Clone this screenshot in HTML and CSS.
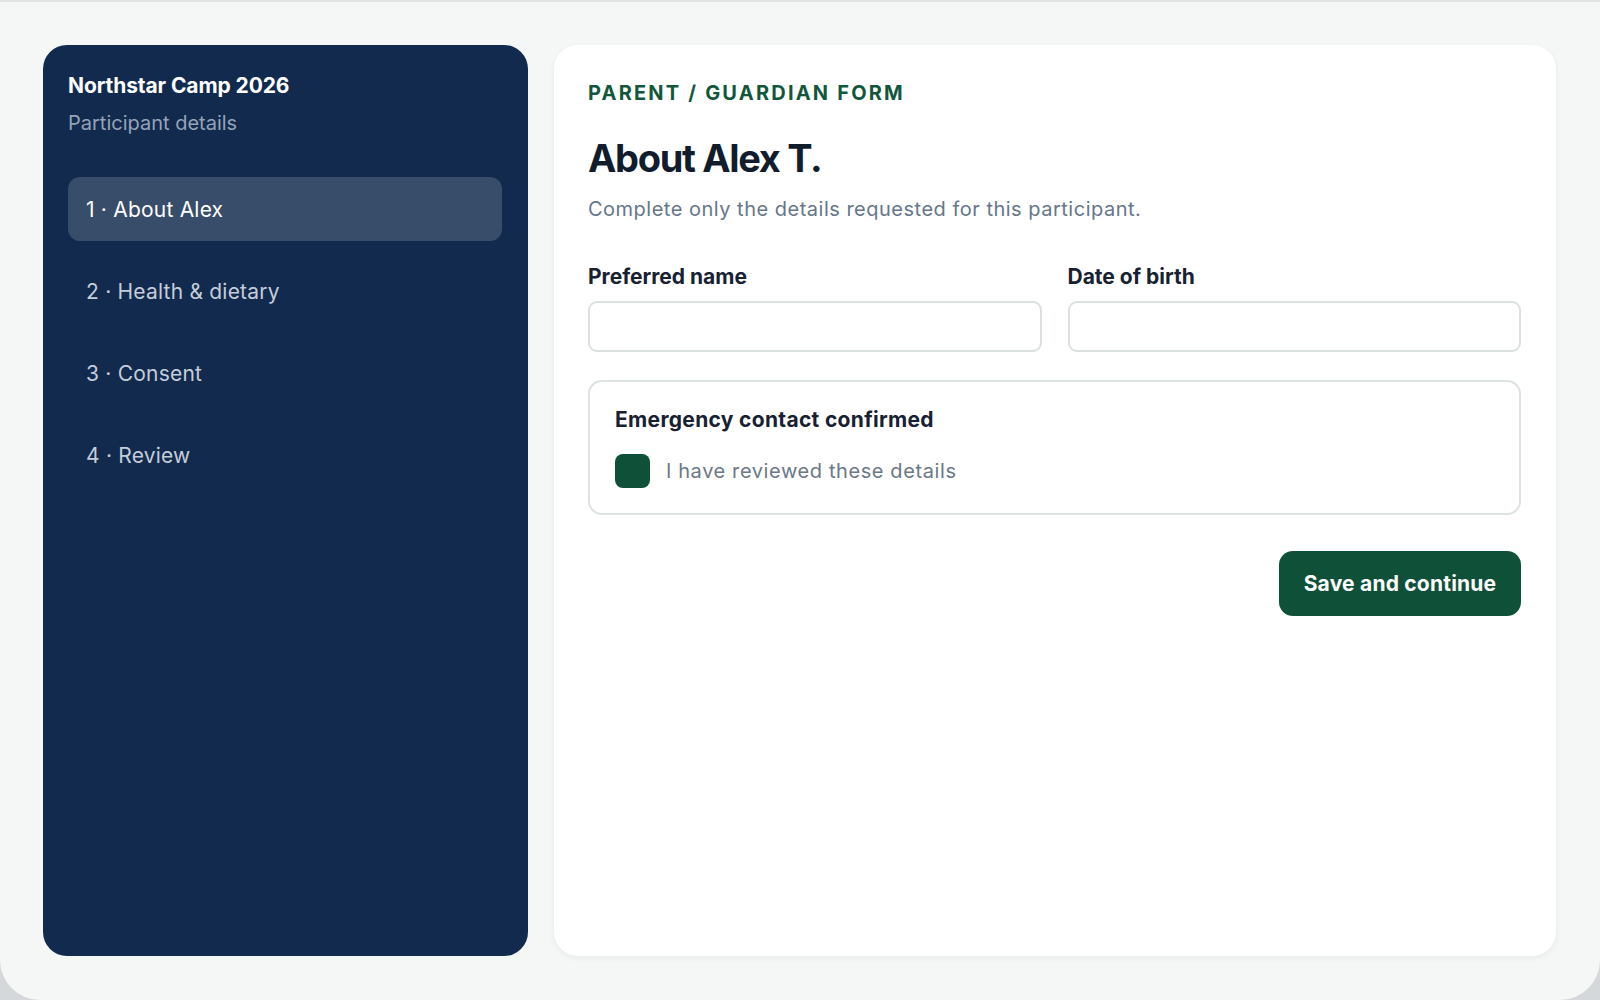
FILE: index.html
```html
<!DOCTYPE html>
<html lang="en">
<head>
<meta charset="utf-8">
<title>Northstar Camp 2026 – About Alex</title>
<link rel="stylesheet" href="styles.css">
</head>
<body>
<div class="page">
  <aside class="sidebar">
    <div class="brand">Northstar Camp 2026</div>
    <div class="brand-sub">Participant details</div>
    <nav class="steps">
      <div class="step active">1 · About Alex</div>
      <div class="step">2 · Health &amp; dietary</div>
      <div class="step">3 · Consent</div>
      <div class="step">4 · Review</div>
    </nav>
  </aside>
  <main class="card">
    <div class="eyebrow">PARENT / GUARDIAN FORM</div>
    <h1 class="title">About Alex T.</h1>
    <p class="lead">Complete only the details requested for this participant.</p>
    <div class="fields">
      <label class="field">
        <span class="label">Preferred name</span>
        <span class="input"></span>
      </label>
      <label class="field">
        <span class="label">Date of birth</span>
        <span class="input"></span>
      </label>
    </div>
    <div class="confirm">
      <div class="confirm-title">Emergency contact confirmed</div>
      <div class="check-row">
        <span class="checkbox"></span>
        <span class="check-text">I have reviewed these details</span>
      </div>
    </div>
    <div class="actions">
      <button class="btn">Save and continue</button>
    </div>
  </main>
</div>
</body>
</html>
```
FILE: styles.css
```css
* { box-sizing: border-box; }
html, body { margin: 0; padding: 0; }
body {
  background: #d5d8db;
  font-family: Inter, "Noto Sans", "Liberation Sans", sans-serif;
  width: 1600px;
  height: 1000px;
  overflow: hidden;
}
.page {
  height: 1000px;
  background: #f5f7f6;
  border-top: 2px solid #e2e4e3;
  border-radius: 0 0 40px 40px;
  padding: 43px 44px 44px 43px;
  display: flex;
  gap: 26px;
}
.sidebar {
  width: 485px;
  flex: none;
  background: #112a4e;
  border-radius: 24px;
  padding: 28px 26px 25px 25px;
}
.brand {
  color: #ffffff;
  font-weight: 700;
  font-size: 21px;
  line-height: 25px;
  letter-spacing: -0.1px;
}
.brand-sub {
  color: #95a3b7;
  font-size: 20px;
  line-height: 28px;
  margin-top: 11px;
}
.steps {
  margin-top: 40px;
  display: flex;
  flex-direction: column;
  gap: 18px;
}
.step {
  height: 64px;
  border-radius: 12px;
  padding-left: 18px;
  display: flex;
  align-items: center;
  color: #c4cdd9;
  font-size: 21px;
  letter-spacing: 0.01em;
}
.step.active {
  background: #384d6a;
  color: #ffffff;
}
.card {
  flex: 1;
  background: #ffffff;
  border-radius: 24px;
  box-shadow: 0 2px 6px rgba(20, 30, 40, 0.06);
  padding: 36px 35px 34px 34px;
}
.eyebrow {
  color: #12573c;
  font-weight: 700;
  font-size: 20px;
  line-height: 24px;
  letter-spacing: 0.11em;
}
.title {
  margin: 30px 0 0;
  color: #111c2d;
  font-weight: 700;
  font-size: 38px;
  line-height: 46px;
  letter-spacing: -0.035em;
}
.lead {
  margin: 14px 0 0;
  color: #66768a;
  font-size: 20px;
  line-height: 28px;
  letter-spacing: 0.025em;
}
.fields {
  margin-top: 41px;
  display: grid;
  grid-template-columns: 1fr 1fr;
  gap: 26px;
}
.field {
  display: flex;
  flex-direction: column;
  gap: 11px;
}
.label {
  color: #172131;
  font-weight: 700;
  font-size: 21px;
  line-height: 26px;
}
.input {
  height: 51px;
  border: 2px solid #dbe1de;
  border-radius: 9px;
  background: #ffffff;
}
.confirm {
  margin-top: 28px;
  border: 2px solid #dde3e0;
  border-radius: 14px;
  padding: 25px 26px 25px 25px;
}
.confirm-title {
  color: #172131;
  font-weight: 700;
  font-size: 21px;
  line-height: 26px;
  letter-spacing: 0.015em;
}
.check-row {
  margin-top: 21px;
  display: flex;
  align-items: center;
  gap: 16px;
}
.checkbox {
  width: 35px;
  height: 34px;
  border-radius: 8px;
  background: #0f5038;
  flex: none;
}
.check-text {
  color: #6a7888;
  font-size: 20px;
  letter-spacing: 0.03em;
}
.actions {
  margin-top: 36px;
  display: flex;
  justify-content: flex-end;
}
.btn {
  width: 242px;
  height: 65px;
  border: none;
  border-radius: 14px;
  background: #0f5039;
  color: #ffffff;
  font-family: inherit;
  font-weight: 700;
  font-size: 21px;
  letter-spacing: 0.01em;
}
```
